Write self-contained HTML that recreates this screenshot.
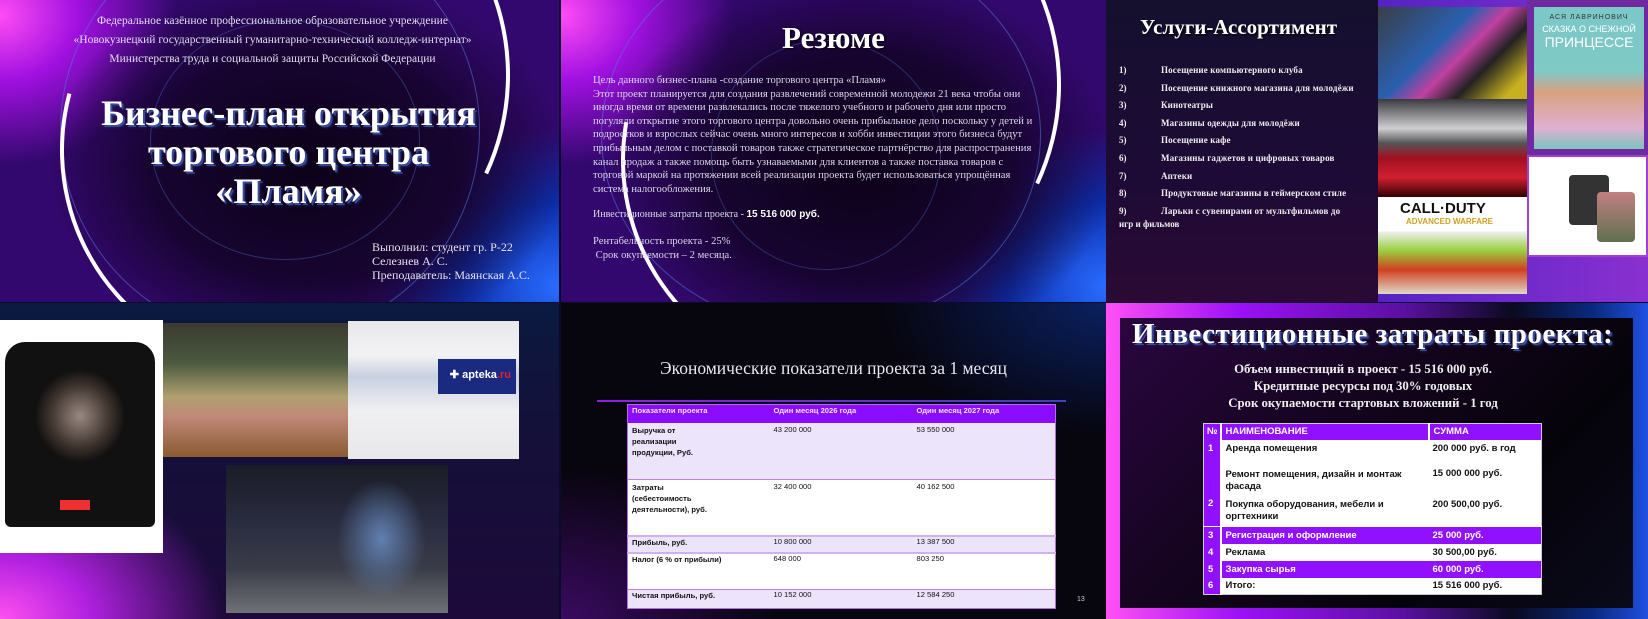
<!DOCTYPE html>
<html><head><meta charset="utf-8"><style>
*{margin:0;padding:0;box-sizing:border-box}
body{width:1648px;height:619px;overflow:hidden;background:#0a0a2a;position:relative;font-family:"Liberation Serif","Noto Serif CJK SC",serif}
.s{position:absolute;overflow:hidden}
.bg{background:radial-gradient(ellipse 55% 75% at 55% 55%,#0c0218 0%,#170430 50%,rgba(40,8,90,0) 85%),radial-gradient(ellipse 45% 70% at 100% 95%,#2a6cff 0%,#0b2fb0 40%,rgba(0,20,100,0) 75%),radial-gradient(ellipse 35% 55% at 0% 5%,#ff4cf5 0%,#a010e0 40%,rgba(80,10,160,0) 90%),#33086e}
.ring{position:absolute;border-radius:50%;border:1.5px solid rgba(90,120,220,.55)}
.arc{position:absolute;border-radius:50%;border:4px solid transparent}
.a{position:absolute;white-space:nowrap}
.t{color:#fff;font-weight:bold;text-shadow:2px 2px 0 #3a4a9a,3px 3px 2px #1a2050}
table{border-collapse:collapse;position:absolute}
</style></head><body>

<!-- Slide 1 -->
<div class="s bg" style="left:0;top:0;width:559px;height:302px">
  <div class="ring" style="left:60px;top:-80px;width:420px;height:420px"></div>
  <div class="ring" style="left:150px;top:20px;width:270px;height:240px;border-color:rgba(70,90,180,.5)"></div>
  <div class="arc" style="left:40px;top:-160px;width:470px;height:470px;border-right-color:#fff;transform:rotate(-20deg)"></div>
  <div class="arc" style="left:60px;top:-70px;width:440px;height:440px;border-left-color:#fff;transform:rotate(-30deg)"></div>
  <div class="a" style="left:0;width:545px;text-align:center;top:12px;font-size:11.5px;color:#e0dcef;line-height:19px">Федеральное казённое профессиональное образовательное учреждение<br>«Новокузнецкий государственный гуманитарно-технический колледж-интернат»<br>Министерства труда и социальной защиты Российской Федерации</div>
  <div class="a t" style="left:16px;width:545px;text-align:center;top:94px;font-size:36px;line-height:39px">Бизнес-план открытия<br>торгового центра<br>«Пламя»</div>
  <div class="a" style="left:372px;top:240px;font-size:12px;line-height:14px;color:#e6e2f0">Выполнил: студент гр. Р-22<br>Селезнев А. С.<br>Преподаватель: Маянская А.С.</div>
</div>

<!-- Slide 2 -->
<div class="s bg" style="left:561px;top:0;width:545px;height:302px">
  <div class="ring" style="left:40px;top:-60px;width:440px;height:390px"></div>
  <div class="ring" style="left:150px;top:40px;width:230px;height:230px;border-color:rgba(70,90,180,.45)"></div>
  <div class="arc" style="left:30px;top:-150px;width:470px;height:470px;border-right-color:#fff;transform:rotate(-20deg)"></div>
  <div class="arc" style="left:60px;top:-60px;width:440px;height:440px;border-left-color:#fff;transform:rotate(-35deg)"></div>
  <div class="a t" style="left:0;width:545px;text-align:center;top:20px;font-size:31px;text-shadow:1px 1px 2px #000">Резюме</div>
  <div class="a" style="left:32px;top:74px;font-size:10.6px;line-height:13.6px;color:#dcd8ea">Цель данного бизнес-плана -создание торгового центра «Пламя»<br>Этот проект планируется для создания развлечений современной молодежи 21 века чтобы они<br>иногда время от времени развлекались после тяжелого учебного и рабочего дня или просто<br>погуляли открытие этого торгового центра довольно очень прибыльное дело поскольку у детей и<br>подростков и взрослых сейчас очень много интересов и хобби инвестиции этого бизнеса будут<br>прибыльным делом с поставкой товаров также стратегическое партнёрство для  распространения<br>канал продаж а также помощь быть узнаваемыми для клиентов а также поставка товаров с<br>торговой маркой на протяжении всей реализации проекта будет использоваться упрощённая<br>система налогообложения.</div>
  <div class="a" style="left:32px;top:209px;font-size:10px;color:#dcd8ea">Инвестиционные затраты проекта - <b style="font-family:'Liberation Sans',sans-serif;color:#fff;font-size:10px">15 516 000 руб.</b></div>
  <div class="a" style="left:32px;top:235px;font-size:10.6px;line-height:13.5px;color:#dcd8ea">Рентабельность проекта  - 25%<br>&nbsp;Срок окупаемости – 2 месяца.</div>
</div>

<!-- Slide 3 -->
<div class="s" style="left:1106px;top:0;width:542px;height:302px;background:linear-gradient(90deg,#1a40d0,#4a20c0 40%,#8a30d0)">
  <div style="position:absolute;left:0;top:0;width:272px;height:302px;background:linear-gradient(180deg,#14102e 0%,#1e0a36 60%,#2a0a34 100%)"></div>
  <div class="a t" style="left:34px;top:15px;font-size:21px;text-shadow:1px 1px 2px #000">Услуги-Ассортимент</div>
  <div class="a" style="left:13px;top:62px;font-size:9px;font-weight:bold;color:#eee;line-height:17.6px">1)<br>2)<br>3)<br>4)<br>5)<br>6)<br>7)<br>8)<br>9)</div>
  <div class="a" style="left:55px;top:62px;font-size:9px;font-weight:bold;color:#eee;line-height:17.6px;letter-spacing:.15px">Посещение компьютерного клуба<br>Посещение книжного магазина для молодёжи<br>Кинотеатры<br>Магазины одежды для молодёжи<br>Посещение кафе<br>Магазины гаджетов и цифровых товаров<br>Аптеки<br>Продуктовые магазины в геймерском стиле<br>Ларьки с сувенирами от мультфильмов  до</div>
  <div class="a" style="left:13px;top:219px;font-size:9px;font-weight:bold;color:#eee">игр и фильмов</div>
  <div style="position:absolute;left:272px;top:7px;width:149px;height:92px;background:linear-gradient(135deg,#3a3e46,#2a5fb0 40%,#c040a0 55%,#222 70%,#c9b020 90%)"></div>
  <div style="position:absolute;left:272px;top:99px;width:149px;height:98px;background:linear-gradient(180deg,#3a3a3e,#cfcfd2 30%,#555 45%,#a01020 60%,#d02030 80%,#300)"></div>
  <div style="position:absolute;left:272px;top:197px;width:149px;height:97px;background:linear-gradient(180deg,#fff 0%,#fff 35%,#eee 36%,#9ad040 55%,#d04020 75%,#e0d8c8 100%)"><div style="font:bold 15px 'Liberation Sans',sans-serif;color:#111;padding:3px 0 0 22px">CALL·DUTY</div><div style="font:bold 8px 'Liberation Sans',sans-serif;color:#d0a020;padding-left:28px">ADVANCED WARFARE</div></div>
  <div style="position:absolute;left:421px;top:0;width:121px;height:155px;background:#702aa0"></div>
  <div style="position:absolute;left:428px;top:7px;width:110px;height:142px;background:linear-gradient(180deg,#7bc8c8 0%,#7fc9c6 45%,#d8a080 60%,#e0b0d0 85%,#7cc4c0)"><div style="font:7px 'Liberation Sans',sans-serif;color:#333;text-align:center;margin-top:7px;letter-spacing:1px">АСЯ ЛАВРИНОВИЧ</div><div style="font:9px 'Liberation Sans',sans-serif;color:#fff;text-align:center;margin-top:3px">СКАЗКА О СНЕЖНОЙ</div><div style="font:14px 'Liberation Sans',sans-serif;color:#fff;text-align:center">ПРИНЦЕССЕ</div></div>
  <div style="position:absolute;left:421px;top:155px;width:121px;height:102px;background:#fff;border:2px solid #a040d0"><div style="position:absolute;left:40px;top:18px;width:40px;height:50px;background:#333;border-radius:4px"></div><div style="position:absolute;left:68px;top:35px;width:38px;height:50px;background:linear-gradient(#c08080,#607050);border-radius:4px"></div></div>
</div>

<!-- Slide 4 -->
<div class="s" style="left:0;top:303px;width:559px;height:316px;background:radial-gradient(ellipse 40% 50% at 0% 100%,#ff50f0 0%,#b020e0 40%,rgba(60,10,120,0) 100%),linear-gradient(180deg,#0a1a40 0%,#14103a 40%,#1d0a3a 100%)">
  <div style="position:absolute;left:0;top:17px;width:163px;height:233px;background:#fff"><div style="position:absolute;left:5px;top:22px;width:150px;height:185px;background:radial-gradient(ellipse 30% 25% at 50% 40%,#9a8a80,#3a302a 70%,#111 100%);border-radius:20px 20px 6px 6px"></div><div style="position:absolute;width:30px;height:10px;background:#f03030;top:180px;left:60px"></div></div>
  <div style="position:absolute;left:163px;top:20px;width:185px;height:134px;background:linear-gradient(180deg,#3a3a30 0%,#4c5a40 30%,#b0a070 55%,#c08878 70%,#8a5a30 100%)"></div>
  <div style="position:absolute;left:348px;top:18px;width:171px;height:138px;background:linear-gradient(180deg,#e8e8ea 0%,#f2f2f4 25%,#c8d0e0 40%,#f0f0f2 65%,#e8e8ea 100%)"><div style="position:absolute;right:3px;top:38px;width:78px;height:35px;background:#1a2a80"></div><div style="position:absolute;right:8px;top:47px;font:bold 11px 'Liberation Sans',sans-serif;color:#fff">✚ apteka<span style="color:#e02030">.ru</span></div></div>
  <div style="position:absolute;left:226px;top:162px;width:222px;height:148px;background:radial-gradient(ellipse 20% 40% at 70% 50%,#6080b0,rgba(0,0,0,0) 100%),linear-gradient(180deg,#1a1c26 0%,#2a2c40 40%,#3a3c48 70%,#707278 100%)"></div>
</div>

<!-- Slide 5 -->
<div class="s" style="left:561px;top:303px;width:545px;height:316px;background:radial-gradient(ellipse 60% 60% at 100% 0%,#0a2060 0%,rgba(0,0,20,0) 70%),radial-gradient(ellipse 50% 60% at 0% 100%,#3a0a60,rgba(0,0,0,0) 80%),#07050e">
  <div class="a" style="left:0;width:545px;text-align:center;top:55px;font-size:17.5px;color:#e8e8f0">Экономические показатели проекта за 1 месяц</div>
  <div style="position:absolute;left:36px;top:97px;width:469px;height:2px;background:linear-gradient(90deg,#9020e0,#4040c0)"></div>
  <table style="left:66px;top:101px;width:429px;font:bold 7.6px 'Liberation Sans',sans-serif;color:#111;border:1px solid #b070e0">
    <tr style="height:18px;background:#8c0cff;color:#f0e0ff"><td style="width:146px;padding:1px 4px;vertical-align:top">Показатели проекта</td><td style="width:143px;padding:1px 0;vertical-align:top">Один месяц 2026 года</td><td style="vertical-align:top;padding:1px 0">Один месяц 2027 года</td></tr>
    <tr style="height:57px;background:#ece4fa;border-bottom:1px solid #c080e0"><td style="padding:2px 4px;vertical-align:top;line-height:11px">Выручка от<br>реализации<br>продукции, Руб.</td><td style="vertical-align:top;padding-top:2px;font-weight:normal">43 200 000</td><td style="vertical-align:top;padding-top:2px;font-weight:normal">53 550 000</td></tr>
    <tr style="height:56px;background:#fff;border-bottom:2px solid #d0b0f0"><td style="padding:2px 4px;vertical-align:top;line-height:11px">Затраты<br>(себестоимость<br>деятельности), руб.</td><td style="vertical-align:top;padding-top:2px;font-weight:normal">32 400 000</td><td style="vertical-align:top;padding-top:2px;font-weight:normal">40 162 500</td></tr>
    <tr style="height:17px;background:#ece4fa;border-bottom:2px solid #d0b0f0"><td style="padding:1px 4px;vertical-align:top">Прибыль, руб.</td><td style="vertical-align:top;font-weight:normal">10 800 000</td><td style="vertical-align:top;font-weight:normal">13 387 500</td></tr>
    <tr style="height:37px;background:#fff;border-bottom:1px solid #c080e0"><td style="padding:1px 4px;vertical-align:top">Налог (6 % от прибыли)</td><td style="vertical-align:top;font-weight:normal">648 000</td><td style="vertical-align:top;font-weight:normal">803 250</td></tr>
    <tr style="height:19px;background:#ece4fa"><td style="padding:1px 4px;vertical-align:top">Чистая прибыль, руб.</td><td style="vertical-align:top;font-weight:normal">10 152 000</td><td style="vertical-align:top;font-weight:normal">12 584 250</td></tr>
  </table>
  <div class="a" style="left:516px;top:293px;font:7px 'Liberation Sans',sans-serif;color:#ccc">13</div>
</div>

<!-- Slide 6 -->
<div class="s" style="left:1106px;top:303px;width:542px;height:316px;background:linear-gradient(90deg,#ff50f5 0%,#9a10f5 25%,#5a10a0 55%,#0a0a20 75%,#0a2a80 90%,#2050e0 100%)">
  <div style="position:absolute;left:14px;top:15px;width:513px;height:290px;background:linear-gradient(135deg,#2a0640 0%,#14041e 40%,#05030a 70%,#0a0a1a 100%)"></div>
  <div class="a t" style="left:26px;top:15px;font-size:29px;letter-spacing:.5px">Инвестиционные затраты проекта:</div>
  <div class="a" style="left:82px;width:350px;text-align:center;top:58px;font-size:12.8px;line-height:17px;font-weight:bold;color:#eee">Объем инвестиций в проект -  15 516 000 руб.<br>Кредитные ресурсы под 30% годовых<br>Срок окупаемости стартовых вложений - 1 год</div>
  <table style="left:97px;top:120px;width:339px;font:bold 9.5px 'Liberation Sans',sans-serif;color:#111;border:1px solid #ccc">
    <tr style="height:16px;background:#9010ff;color:#fff"><td style="width:17px;padding-left:3px;border-right:2px solid #fff">№</td><td style="width:208px;padding-left:4px;border-right:2px solid #fff">НАИМЕНОВАНИЕ</td><td style="padding-left:4px">СУММА</td></tr>
    <tr style="height:26px;background:#fff"><td rowspan="2" style="background:#9010ff;color:#fff;padding-left:4px;vertical-align:top;padding-top:3px;border-right:2px solid #fff">1</td><td style="padding-left:4px;vertical-align:top;padding-top:3px">Аренда помещения</td><td style="padding-left:4px;vertical-align:top;padding-top:3px">200 000 руб. в год</td></tr>
    <tr style="height:30px;background:#fff"><td style="padding-left:4px;line-height:12px">Ремонт помещения, дизайн и монтаж<br>фасада</td><td style="padding-left:4px;vertical-align:top;padding-top:2px">15 000 000 руб.</td></tr>
    <tr style="height:31px;background:#fff"><td style="background:#9010ff;color:#fff;padding-left:4px;vertical-align:top;padding-top:2px;border-right:2px solid #fff">2</td><td style="padding-left:4px;line-height:12px">Покупка оборудования, мебели и<br>оргтехники</td><td style="padding-left:4px;vertical-align:top;padding-top:3px">200 500,00 руб.</td></tr>
    <tr style="height:17px;background:#9010ff;color:#fff;border-top:1px solid #fff"><td style="padding-left:4px;border-right:2px solid #fff">3</td><td style="padding-left:4px">Регистрация и оформление</td><td style="padding-left:4px">25 000 руб.</td></tr>
    <tr style="height:17px;background:#fff"><td style="background:#9010ff;color:#fff;padding-left:4px;border-right:2px solid #fff">4</td><td style="padding-left:4px">Реклама</td><td style="padding-left:4px">30 500,00 руб.</td></tr>
    <tr style="height:17px;background:#9010ff;color:#fff"><td style="padding-left:4px;border-right:2px solid #fff">5</td><td style="padding-left:4px">Закупка сырья</td><td style="padding-left:4px">60 000 руб.</td></tr>
    <tr style="height:17px;background:#fff"><td style="background:#9010ff;color:#fff;padding-left:4px;border-right:2px solid #fff">6</td><td style="padding-left:4px">Итого:</td><td style="padding-left:4px">15 516 000 руб.</td></tr>
  </table>
</div>
</body></html>
